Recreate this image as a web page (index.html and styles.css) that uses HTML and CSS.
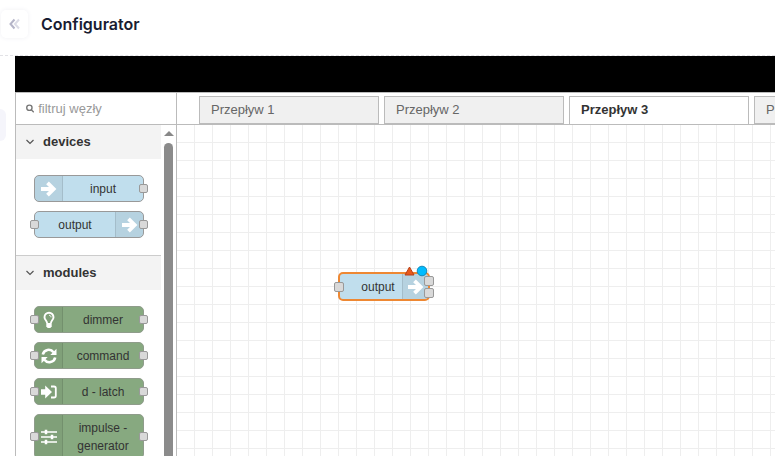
FILE: index.html
```
<!DOCTYPE html>
<html lang="pl">

<head>
    <meta charset="UTF-8" />
    <meta name="viewport" content="width=device-width, initial-scale=1.0" />
    <title>Configurator</title>
    <link rel="stylesheet" href="styles.css">
</head>

<body>
    <header class="header">
        <button type="button" class="collapse" aria-label="Collapse menu">
            <svg width="12" height="12" viewBox="0 0 12 12" fill="none" stroke-width="2">
                <path d="M5.5 1.500 1.500 6l4 4.500" stroke="#b5b5c8" />
                <path d="M10 1.500 6 6l4 4.500" stroke="#dcdce6" />
            </svg>
        </button>
        <h1>Configurator</h1>
    </header>

    <main class="main">
        <div class="side-handle"></div>
        <div class="editor">
            <div class="editor-bar"></div>
            <div class="workspace">
                <aside class="palette">
                    <label class="search">
                        <svg width="9" height="9" viewBox="0 0 9 9" fill="none" stroke="#777" stroke-width="1.500">
                            <circle cx="3.700" cy="3.700" r="2.900" />
                            <path d="M5.800 5.800 8.500 8.500" />
                        </svg>
                        <input type="text" placeholder="filtruj węzły" aria-label="filtruj węzły" />
                    </label>
                    <div class="palette-body">
                        <div class="palette-list">
                            <section class="category">
                                <h2>
                                    <svg width="8" height="6" viewBox="0 0 8 6" fill="none" stroke="#555" stroke-width="1.200"><path d="M.5 1 4 4.500 7.500 1" /></svg>
                                    devices
                                </h2>
                                <div class="nodes">
                                    <div class="node blue">
                                        <span class="icon">
                                            <svg width="16" height="16" viewBox="0 0 16 16" fill="none" stroke="#fff" stroke-width="3.800"><path d="M0 8h12M6.500 1.800 12.700 8l-6.200 6.200" /></svg>
                                        </span>
                                        <span class="name">input</span>
                                        <i class="port right"></i>
                                    </div>
                                    <div class="node blue">
                                        <span class="name">output</span>
                                        <span class="icon end">
                                            <svg width="16" height="16" viewBox="0 0 16 16" fill="none" stroke="#fff" stroke-width="3.800"><path d="M0 8h12M6.500 1.800 12.700 8l-6.200 6.200" /></svg>
                                        </span>
                                        <i class="port left"></i>
                                        <i class="port right"></i>
                                    </div>
                                </div>
                            </section>
                            <section class="category">
                                <h2>
                                    <svg width="8" height="6" viewBox="0 0 8 6" fill="none" stroke="#555" stroke-width="1.200"><path d="M.5 1 4 4.500 7.500 1" /></svg>
                                    modules
                                </h2>
                                <div class="nodes">
                                    <div class="node green">
                                        <span class="icon">
                                            <svg width="16" height="18" viewBox="0 0 16 18" fill="none" stroke="#fff">
                                                <path d="M6 12C6 9.500 3.500 9 3.500 6.200a4.500 4.500 0 0 1 9 0c0 2.800-2.500 3.300-2.500 5.800" stroke-width="1.900" />
                                                <path d="M8 4.300c1.300 0 2 .7 2 2" stroke-width="1" />
                                                <path d="M5.300 12h5.400v3.500L9.300 17H6.700l-1.400-1.500z" fill="#fff" stroke="none" />
                                            </svg>
                                        </span>
                                        <span class="name">dimmer</span>
                                        <i class="port left"></i>
                                        <i class="port right"></i>
                                    </div>
                                    <div class="node green">
                                        <span class="icon">
                                            <svg width="16" height="16" viewBox="0 0 16 16" fill="none" stroke="#fff" stroke-width="2.600">
                                                <path d="M1.800 6.500A6 6 0 0 1 12.500 4.300M14.200 9.500A6 6 0 0 1 3.500 11.700" />
                                                <path d="M15.500 .8v6.200h-6.200zM.5 15.200V9h6.200z" fill="#fff" stroke="none" />
                                            </svg>
                                        </span>
                                        <span class="name">command</span>
                                        <i class="port left"></i>
                                        <i class="port right"></i>
                                    </div>
                                    <div class="node green">
                                        <span class="icon">
                                            <svg width="16" height="14" viewBox="0 0 16 14">
                                                <path d="M0 4.200h4.200V.5L11 7l-6.800 6.500V9.800H0z" fill="#fff" />
                                                <path d="M10 1.500h3q1.800 0 1.800 1.800v7.400q0 1.800-1.800 1.800h-3" fill="none" stroke="#fff" stroke-width="1.800" />
                                            </svg>
                                        </span>
                                        <span class="name">d - latch</span>
                                        <i class="port left"></i>
                                        <i class="port right"></i>
                                    </div>
                                    <div class="node green">
                                        <span class="icon">
                                            <svg width="16" height="16" viewBox="0 0 16 16" stroke="#fff">
                                                <path d="M0 3h16M0 8h16M0 13h16" stroke-width="1.500" />
                                                <path d="M5 .8v4.400M11 5.800v4.400M5 10.800v4.400" stroke-width="2.500" />
                                            </svg>
                                        </span>
                                        <span class="name">impulse - generator</span>
                                        <i class="port left"></i>
                                        <i class="port right"></i>
                                    </div>
                                </div>
                            </section>
                        </div>
                        <div class="scrollbar">
                            <div class="scroll-arrow"></div>
                            <div class="scroll-thumb"></div>
                        </div>
                    </div>
                </aside>

                <div class="flow">
                    <nav class="tabs">
                        <a href="#flow1">Przepływ 1</a>
                        <a href="#flow2">Przepływ 2</a>
                        <a href="#flow3" class="active">Przepływ 3</a>
                        <a href="#flow4">Przepływ 4</a>
                    </nav>
                    <div class="canvas">
                        <div class="node blue selected">
                            <span class="name">output</span>
                            <span class="icon end">
                                <svg width="16" height="16" viewBox="0 0 16 16" fill="none" stroke="#fff" stroke-width="3.800"><path d="M0 8h12M6.500 1.800 12.700 8l-6.200 6.200" /></svg>
                            </span>
                            <i class="port left"></i>
                            <i class="port right first"></i>
                            <i class="port right second"></i>
                            <svg class="status" width="24" height="12" viewBox="0 0 24 12">
                                <path d="M5.500 2 10 10H1z" fill="#e8591c" stroke="#b8401a" stroke-linejoin="round" />
                                <circle cx="18" cy="6" r="4.800" fill="#00bcff" stroke="#1488b8" />
                            </svg>
                        </div>
                    </div>
                </div>
            </div>
        </div>
    </main>
</body>

</html>
```
FILE: styles.css
```
* {
    box-sizing: border-box;
}

body {
    margin: 0;
    height: 100vh;
    display: flex;
    flex-direction: column;
    overflow: hidden;
    background: white;
    color: #444;
    font-family: "Liberation Sans", Arial, sans-serif;
    font-size: 13px;
}

.header {
    display: flex;
    align-items: center;
    gap: 13px;
    padding: 10px 1px 17px;
    border-bottom: 1px dashed #e2e2e6;
}

.header h1 {
    margin: 0;
    color: #181c32;
    font: 600 16px/28px Inter, sans-serif;
}

.collapse {
    display: flex;
    align-items: center;
    justify-content: center;
    width: 27px;
    height: 28px;
    padding: 0;
    border: 0;
    border-radius: 5px;
    background: white;
    box-shadow: 0 0 5px #f0f0f4;
}

.main {
    flex: 1;
    display: flex;
    min-height: 0;
}

.side-handle {
    width: 6px;
    height: 32px;
    margin: 53px 9px 0 0;
    border-radius: 0 6px 6px 0;
    background: #f5f5fb;
}

.editor {
    flex: 1;
    display: flex;
    flex-direction: column;
    min-width: 0;
}

.editor-bar {
    height: 36px;
    background: black;
}

.workspace {
    flex: 1;
    display: flex;
    min-height: 0;
    border-top: 1px solid #bbb;
    border-left: 1px solid #bbb;
}

/* palette */
.palette {
    width: 161px;
    display: flex;
    flex-direction: column;
    border-right: 1px solid #bbb;
}

.search {
    display: flex;
    align-items: center;
    gap: 4px;
    height: 32px;
    padding: 0 10px;
    border-bottom: 1px solid #bbb;
}

.search input {
    width: 100%;
    min-width: 0;
    padding: 0;
    border: 0;
    outline: 0;
    background: none;
    font: inherit;
}

.search input::placeholder {
    color: #999;
}

.palette-body {
    flex: 1;
    display: flex;
    min-height: 0;
}

.palette-list {
    flex: 1;
    overflow: hidden;
}

.category {
    border-bottom: 1px solid #ccc;
}

.category h2 {
    display: flex;
    align-items: center;
    gap: 9px;
    margin: 0;
    padding: 0 10px;
    background: #f3f3f3;
    color: #333;
    font-size: 13px;
    line-height: 34px;
}

.nodes {
    display: flex;
    flex-direction: column;
    gap: 9px;
    padding: 16px 17px 17px 18px;
}

.scrollbar {
    width: 15px;
    display: flex;
    flex-direction: column;
    align-items: center;
    gap: 7px;
    padding-top: 6px;
}

.scroll-arrow {
    border: 5px solid transparent;
    border-top: 0;
    border-bottom-color: #888;
}

.scroll-thumb {
    flex: 1;
    width: 9px;
    border-radius: 5px 5px 0 0;
    background: #8b8b8b;
}

/* nodes */
.node {
    position: relative;
    display: flex;
    border: 1px solid #999;
    border-radius: 5px;
    color: #333;
    font-size: 12px;
    line-height: 18px;
}

.blue {
    background: #c0deed;
}

.green {
    border-color: #8f9c8b;
    background: #87a980;
}

.node .icon {
    width: 28px;
    display: flex;
    align-items: center;
    justify-content: center;
    border-right: 1px solid rgba(0, 0, 0, 0.1);
    border-radius: 4px 0 0 4px;
    background: rgba(0, 0, 0, 0.05);
}

.node .icon.end {
    border-right: 0;
    border-left: 1px solid rgba(0, 0, 0, 0.1);
    border-radius: 0 4px 4px 0;
}

.node .name {
    flex: 1;
    padding: 4px 10px 3px;
    text-align: center;
}

.port {
    position: absolute;
    top: 0;
    bottom: 0;
    width: 9px;
    height: 9px;
    margin: auto 0;
    border: 1px solid #999;
    border-radius: 2px;
    background: #d9d9d9;
}

.port.left {
    left: -5px;
}

.port.right {
    right: -5px;
}

/* flow */
.flow {
    flex: 1;
    display: flex;
    flex-direction: column;
    min-width: 0;
}

.tabs {
    display: flex;
    gap: 5px;
    height: 32px;
    padding: 3px 0 0 22px;
    border-bottom: 1px solid #bbb;
    overflow: hidden;
}

.tabs a {
    flex: 0 0 180px;
    padding-left: 11px;
    border: 1px solid #bbb;
    background: #f0f0f0;
    color: #666;
    line-height: 26px;
    text-decoration: none;
}

.tabs .active {
    border-bottom: 0;
    background: white;
    color: #333;
    font-weight: bold;
}

.canvas {
    flex: 1;
    position: relative;
    background-image:
        linear-gradient(to left, #eee 1px, transparent 1px),
        linear-gradient(to top, #eee 1px, transparent 1px);
    background-size: 18px 18px;
}

.selected {
    position: absolute;
    left: 161px;
    top: 147px;
    width: 92px;
    height: 29px;
    border: 2px solid #ee8833;
}

.selected .icon {
    width: 26px;
}

.selected .name {
    padding: 4px 6px 3px 20px;
}

.selected .port {
    width: 10px;
    height: 10px;
}

.selected .port.left {
    left: -6px;
}

.selected .port.right {
    right: -6px;
    margin: 0;
}

.selected .port.first {
    top: 2px;
}

.selected .port.second {
    top: 14px;
}

.status {
    position: absolute;
    right: 0;
    top: -9px;
}
```
